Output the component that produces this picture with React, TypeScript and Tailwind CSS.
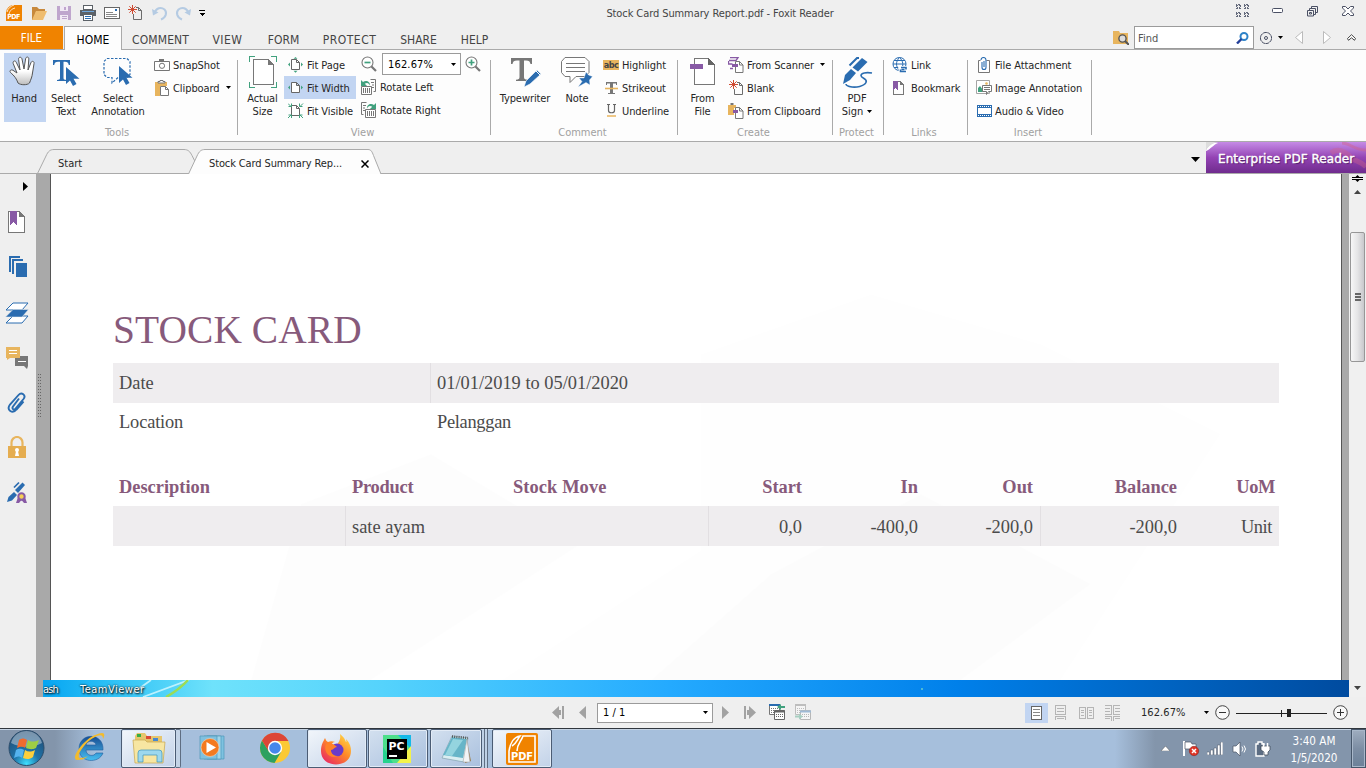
import React from "react";

type P = { children?: React.ReactNode; className?: string };

function Svg({ w, h, children, className = "", crisp = false }: { w: number; h: number; children: React.ReactNode; className?: string; crisp?: boolean }) {
  return (
    <svg width={w} height={h} viewBox={`0 0 ${w} ${h}`} fill="none" className={"shrink-0 " + className} shapeRendering={crisp ? "crispEdges" : undefined}>
      {children}
    </svg>
  );
}

const Down = ({ className = "" }: P) => (
  <Svg w={5} h={3} className={className}><path d="M0 0h5L2.500 3z" fill="#000" /></Svg>
);

/* ---------- quick access icons ---------- */
function FoxitIcon() {
  return (
    <Svg w={17} h={17}>
      <path d="M6 0h10v16H0V7C1 3 3 1 6 0z" fill="#f08300" />
      <path d="M1 7C2 3 5 1 8 0M3 9C4 5 6 4 9 3" stroke="#fff" strokeWidth=".8" />
      <text x="1.200" y="13.800" fontSize="7" fontWeight="bold" fill="#fff" fontFamily="DejaVu Sans" textLength="13">PDF</text>
    </Svg>
  );
}

function NewDoc() {
  return (
    <Svg w={15} h={16}>
      <path d="M5.500 9v5.500h8v-9l-3-3H8M10.500 2.500v3h3" stroke="#6c6c6c" />
      <path d="M4.500 0v9M0 4.500h9M1.300 1.300l6.400 6.400M7.700 1.300L1.300 7.700" stroke="#cf4b32" />
    </Svg>
  );
}

/* ---------- ribbon building blocks ---------- */
function Small({ icon, label, active, tail, className = "" }: { icon: React.ReactNode; label: string; active?: boolean; tail?: boolean; className?: string }) {
  return (
    <div className={"flex h-[23px] items-center whitespace-nowrap " + (active ? "bg-[#c2d5f2] " : "") + className}>
      <span className="flex w-[16px] shrink-0 justify-center">{icon}</span>
      <span className="ml-[3px] pt-[3px] tracking-[-0.08px]">{label}</span>
      {tail && <Down className="ml-[6px]" />}
    </div>
  );
}

function Big({ icon, lines, active, className = "" }: { icon: React.ReactNode; lines: React.ReactNode[]; active?: boolean; className?: string }) {
  return (
    <div className={"flex h-[69px] flex-col items-center whitespace-nowrap text-center leading-[13px] tracking-[-0.08px] " + (active ? "bg-[#c2d5f2] " : "") + className}>
      <span className="flex h-[39px] shrink-0 items-start pt-[3px]">{icon}</span>
      {lines.map((l, i) => <span key={i}>{l}</span>)}
    </div>
  );
}

function Group({ name, className = "", children }: P & { name: string }) {
  return (
    <section className={"flex shrink-0 " + className}>
      <div className="flex grow flex-col">
        <div className="flex h-[76px] pt-[3px]">{children}</div>
        <div className="pr-[3px] text-center leading-[16px] text-[#a0a0a0]">{name}</div>
      </div>
      <div className="mt-[10px] h-[75px] w-px bg-[#aaaaaa]" />
    </section>
  );
}

/* ---------- ribbon icons ---------- */
const Cursor = ({ x, y }: { x: number; y: number }) => (
  <path transform={`translate(${x} ${y})`} d="M0 0v17l4-3.500 3 5.500 3.500-2-3-5.300h6z" fill="#2a6cb0" />
);

function HandIcon() {
  return (
    <Svg w={28} h={30} className="-ml-[2px]">
      <defs><linearGradient id="hand" x1="0" y1="0" x2="0" y2="1"><stop offset=".5" stopColor="#fff" /><stop offset="1" stopColor="#bdbdbd" /></linearGradient></defs>
      <path d="M9 27C7 21 3 18 1.500 16.500c-1.500-1.500.5-3.500 2.500-2.200L8 17 4.200 7.500C3.500 5 6.200 4 7.200 6.200L11 14 9.600 3.500c-.3-2.800 2.900-3 3.400-.5L15 13l1.600-10.200c.4-2.500 3.400-2.200 3.200.3L19 14l3-7.500c1-2 3.600-1.200 3 1.200L23.500 17c-.4 4-1.500 6-3 10-2 2.300-9 2.300-11.500 0z" fill="url(#hand)" stroke="#555" strokeWidth="1" />
    </Svg>
  );
}
const SelectTextIcon = () => (
  <Svg w={28} h={32}>
    <path d="M1 4h17v5h-1.200C16.300 6.500 15.500 5.700 13 5.700h-1.500V22c0 1.500.8 1.800 3 2v1H5v-1c2.200-.2 3-.5 3-2V5.700H6C3.500 5.700 2.700 6.500 2.200 9H1z" fill="#2a6cb0" />
    <Cursor x={14} y={11} />
  </Svg>
);
const SelectAnnotIcon = () => (
  <Svg w={30} h={31}>
    <path d="M4 2.500h20l3 3v13l-3 3M15 21.500L9 27v-5.500H4l-3-3v-13l3-3" stroke="#2a6cb0" strokeDasharray="2.500 1.500" strokeWidth="1.200" />
    <Cursor x={16} y={10} />
  </Svg>
);
const CameraIcon = () => (
  <Svg w={16} h={12}><path d="M.5 2.500h15v9H.5z" stroke="#757575" fill="#fff" /><path d="M5 0h5v2H5z" fill="#757575" /><circle cx="8" cy="6.800" r="2.600" stroke="#757575" /></Svg>
);
const Clip = () => (
  <Svg w={16} h={16}><path d="M1 2h12v4H6v10H1z" fill="#e8b55e" /><path d="M4 3V1.500h2V.500h3v1h2V3z" fill="#fff" stroke="#777" /><path d="M6.500 6.500h5l3 3v6h-8zM11.500 6.500v3h3" stroke="#777" fill="#fff" /></Svg>
);
const ActualIcon = () => (
  <Svg w={28} h={32} crisp><path d="M.5 6V.500H6M22 .500h5.500V6M27.500 26v5.500H22M6 31.500H.5V26" stroke="#41a17e" /><path d="M4.500 3.500h15l5 5v20h-20z" fill="#fff" stroke="#777" /><path d="M19 3v6h6z" fill="#777" /></Svg>
);
function FitIcon({ kind }: { kind: "page" | "width" | "visible" }) {
  return (
    <Svg w={16} h={16}>
      <path d="M3.500 2.500h5l3 3v7h-8zM8.500 2.500v3h3" stroke="#666" fill="#fff" />
      {kind !== "visible" && <path d="M0 7.500l2-2v4zM15 7.500l-2-2v4z" fill="#41a17e" />}
      {kind === "page" && <path d="M7.500 0l2 1.700h-4zM7.500 15.700l2-2h-4z" fill="#41a17e" />}
      {kind === "visible" && <path d="M0 .500l3 3M.5 3.500h3v-3M15 .500l-3 3M14.500 3.500h-3v-3M0 15l3-3M.5 12h3v3M15 15l-3-3M14.500 12h-3v3" stroke="#41a17e" />}
    </Svg>
  );
}
const Mag = ({ plus = false }) => (
  <Svg w={16} h={16}><circle cx="6.500" cy="6.500" r="5.500" stroke="#777" strokeWidth="1.100" fill="#fff" /><path d="M10.500 10.500L15 15" stroke="#777" strokeWidth="2.200" /><path d={plus ? "M3.500 6.500h6M6.500 3.500v6" : "M3.500 6.500h6"} stroke="#41a17e" strokeWidth="1.700" /></Svg>
);
const Rotate = ({ right = false }) => (
  <Svg w={16} h={16}>
    <g transform={right ? "translate(15 0) scale(-1 1)" : undefined}>
      <path d="M9.500 .500h5v12h-2" stroke="#777" /><path d="M10 3.500h3M11 6h2M11 8.500h2" stroke="#777" />
      <path d="M.5 7.500h10v8H.5z" fill="#fff" stroke="#777" /><path d="M2.500 9v5M4.500 9v5M6.500 9v5M8.500 9v5" stroke="#777" />
      <path d="M0 1v6h6L3.800 4.800C6 3 8 4 9 6.500 9.500 2.500 5 .500 2 3z" fill="#41a17e" />
    </g>
  </Svg>
);
const TypeIcon = () => (
  <Svg w={31} h={32}><path d="M1 2h21v6h-1.500C20 5.500 19 4.500 16 4.500h-2V21c0 2 .8 2.500 3.500 2.700V25H6v-1.300C8.700 23.500 9.500 23 9.500 21V4.500H7C4 4.500 3 5.500 2.500 8H1z" fill="#777" /><path d="M14 31l2-6L27 14l4 4L20 28z" fill="#2a6cb0" stroke="#fff" strokeWidth=".6" /><path d="M26 15l4 4" stroke="#fff" /></Svg>
);
const NoteIcon = () => (
  <Svg w={32} h={32}><path d="M4 1.500h20l4 4v11l-4 4H15L9 26.500v-6H4l-3.500-4v-11z" stroke="#777" fill="#fff" /><path d="M5 7.500h19M5 11.500h19M5 15.500h19" stroke="#777" /><path d="M25 16l2.500 3 4 1.500-3 3.500.5 5-4-2.500L17 31l4-5.500-3-3.500h5z" fill="#2a6cb0" stroke="#fff" strokeWidth=".4" /></Svg>
);
const FileIcon = () => (
  <Svg w={26} h={31} crisp><path d="M4.500 2.500h14l6 6v20h-20z" fill="#fff" stroke="#777" /><path d="M18 2v7h7z" fill="#666" /><path d="M0 8h13v5H0z" fill="#885aa5" /></Svg>
);
const ScannerIcon = () => (
  <Svg w={16} h={16}><path d="M2 .700h8L8 3.500H1" stroke="#885aa5" strokeWidth="1.300" /><path d="M.5 4v3h4M2 11.500h3" stroke="#885aa5" strokeWidth="1.300" /><path d="M7.500 4.500h4l3.500 3.500v7.500H7.500zM11.500 4.500V8H15" stroke="#777" fill="#fff" /><path d="M4 7h6v3H4z" fill="#885aa5" /></Svg>
);
const FromClip = () => (
  <Svg w={16} h={16}><path d="M0 2h8v3H6v7H0z" fill="#e8b55e" /><path d="M2.500 0h3v2h-3z" fill="#777" /><path d="M7.500 4.500h4l3.500 3.500v7.500H7.500zM11.500 4.500V8H15" stroke="#777" fill="#fff" /><path d="M5 7h5v3H5z" fill="#885aa5" /></Svg>
);
const SignIcon = () => (
  <Svg w={31} h={33}>
    <path d="M1 28l2-9 6-6 5 4-6 7z" fill="#2a6cb0" /><path d="M10.500 11.500L20 2l5.500 4-9.500 9.500z" fill="#2a6cb0" /><path d="M7.500 9.500L15 2h2" stroke="#2a6cb0" strokeWidth="2" />
    <path d="M30 17c-6-1-11 0-11 2.500 0 3 7 3 5 7-2 4-10 5-14 4.500-3-.5-6-1-6-3" stroke="#2a6cb0" strokeWidth="1.600" />
  </Svg>
);
const GlobeIcon = () => (
  <Svg w={16} h={16}><circle cx="7.500" cy="7" r="6.500" stroke="#2a6cb0" fill="#fff" /><path d="M1 7h13M2 3.500h11M2 10.500h8M7.500.500c-4 4-4 9 0 13M7.500.500c4 4 4 7 2 13" stroke="#2a6cb0" /><path d="M6 9h10v7H7z" fill="#fff" /><path d="M9 10.500h5v2M14 14.500H8.500v-2M9.500 12.500h3" stroke="#2a6cb0" strokeWidth="1.600" /></Svg>
);
const BookmarkIcon = () => (
  <Svg w={12} h={14} crisp className="-ml-[2px]"><path d="M.5 7v6.500h10v-9l-4-4h-2" stroke="#777" /><path d="M7 0v4h4z" fill="#777" /><path d="M0 0h5v9L2.500 7 0 9z" fill="#885aa5" /></Svg>
);
const AttachIcon = () => (
  <Svg w={12} h={16}><path d="M8.500 3.500h3v12H.5v-12h2" stroke="#777" fill="#fff" /><path d="M4 5v5.500a2 2 0 004 0V3a2.300 2.300 0 00-5 0M6 4v6" stroke="#2a6cb0" strokeWidth="1.100" /></Svg>
);
const ImageIcon = () => (
  <Svg w={16} h={15}><path d="M.5.500h13v13H.5z" stroke="#a5a5a5" fill="#fff" /><path d="M2 12V8l2-2 3 4v2z" fill="#41a17e" /><circle cx="10.500" cy="3.500" r="1.300" fill="#e8b55e" /><path d="M6.500 5.500h9v6h-3l-2 3v-3h-4z" stroke="#777" fill="#fff" /><path d="M8 7.500h6M8 9.500h6" stroke="#777" /></Svg>
);
const FilmIcon = () => (
  <Svg w={15} h={12} crisp><path d="M0 0h15v12H0z" fill="#2a6cb0" /><path d="M1 3h13v6H1z" fill="#fff" /><path d="M1 1.500h14M1 10.500h14" stroke="#fff" strokeDasharray="1 1" /></Svg>
);

function TitleBar() {
  return (
    <header className="flex h-[26px] items-center">
      <div className="flex w-[500px] items-center pl-[6px]">
        <FoxitIcon />
        <Svg w={17} h={15} className="ml-[8px]"><path d="M1 1h5l2 2h6v3H5l-3 8H1z" fill="#c8893c" /><path d="M5 5h11l-4 9H1z" fill="#efbd70" /></Svg>
        <Svg w={15} h={15} className="ml-[9px]" crisp><path d="M0 0h14v14H0z" fill="#bfa6cd" /><path d="M3 0h8v5H3zM3 9h8v5H3z" fill="#f1eaf4" /><path d="M7 1h2v3H7zM5 10h5v1H5zM5 12h5v1H5z" fill="#bfa6cd" /></Svg>
        <Svg w={17} h={16} className="ml-[8px]" crisp><path d="M0 5h16v6H0z" fill="#5c6268" /><path d="M3.500.500h9v4h-9zM3.500 9.500h9v6h-9z" fill="#fff" stroke="#5c6268" /><path d="M2 6h12v1H2z" fill="#6fa8dc" /><path d="M5 11.500h6M5 13.500h6" stroke="#2a6cb0" /></Svg>
        <Svg w={16} h={12} className="ml-[7px]" crisp><path d="M.5.500h15v11H.5z" fill="#fff" stroke="#666" /><path d="M2 5.500h7M2 7.500h11M2 9.500h11" stroke="#888" /><path d="M11 2h2v2h-2z" fill="#2a6cb0" /></Svg>
        <span className="ml-[8px]"><NewDoc /></span>
        <Svg w={16} h={15} className="ml-[9px]"><path d="M2.500 7C4 2 9 .500 12.500 3.500c3 3 1.500 8-3.500 10" stroke="#b5cbe3" strokeWidth="2" /><path d="M0 3l1 6.500 5.500-3z" fill="#b5cbe3" /></Svg>
        <Svg w={16} h={15} className="ml-[7px]"><g transform="translate(16 0) scale(-1 1)"><path d="M2.500 7C4 2 9 .500 12.500 3.500c3 3 1.500 8-3.500 10" stroke="#b5cbe3" strokeWidth="2" /><path d="M0 3l1 6.500 5.500-3z" fill="#b5cbe3" /></g></Svg>
        <Svg w={6} h={6} className="ml-[8px]" crisp><path d="M0 0h6v1H0zM0 3h6L3 6z" fill="#000" /></Svg>
      </div>
      <div className="w-[440px] pt-[2px] text-center tracking-[-0.09px] text-[#444]">Stock Card Summary Report.pdf - Foxit Reader</div>
      <div className="ml-auto flex items-center pr-[12px] pb-[4px]">
        <Svg w={14} h={14} className="mr-[22px]" crisp>
          {[[0, 0], [8, 0], [0, 8], [8, 8]].map(([x, y]) => <path key={`${x}${y}`} transform={`translate(${x} ${y})`} d="M.5 2V.500H4.500V4.500H.5V2M1 1l3 3M4 1L1 4" stroke="#63697b" strokeDasharray="2 1" />)}
        </Svg>
        <Svg w={12} h={6} className="mr-[23px]"><rect x=".5" y=".5" width="10" height="4" rx="1" stroke="#4a5064" fill="#fff" /></Svg>
        <Svg w={12} h={11} className="mr-[23px]"><path d="M4.500 3V.500h6v6H8M2.500 5V2.500h6v6H7M.5 4.500h6v5.500H.5zM2.500 6.500h2v1.500h-2z" stroke="#4a5064" fill="none" /></Svg>
        <Svg w={12} h={10}><path d="M.5.500h3L6 3 8.500.500h3v1.500L8.500 5l3 3v1.500h-3L6 7 3.500 9.500h-3V8l3-3-3-3z" stroke="#4a5064" fill="#fff" /></Svg>
      </div>
    </header>
  );
}

function MenuRow() {
  const item = "h-full flex items-center justify-center pt-[4px]";
  return (
    <nav className="flex h-[24px] shrink-0 border-b border-[#aaaaaa] text-[12px] text-[#444]">
      <div className="flex w-[63px] items-center justify-center bg-[#f08300] pt-[3px] text-[11.500px] text-white">FILE</div>
      <div className="ml-[1px] flex h-[24px] w-[58px] items-center justify-center border border-b-0 border-[#aaaaaa] bg-[#fdfdfd] pt-[3px] text-black">HOME</div>
      <div className={item + " w-[77px] tracking-[0.100px]"}>COMMENT</div>
      <div className={item + " w-[57px] tracking-[0.500px]"}>VIEW</div>
      <div className={item + " w-[55px]"}>FORM</div>
      <div className={item + " w-[77px] tracking-[0.500px]"}>PROTECT</div>
      <div className={item + " w-[61px]"}>SHARE</div>
      <div className={item + " w-[51px]"}>HELP</div>
      <div className="ml-auto flex h-[23px] items-center pr-[10px] text-[11px]">
        <Svg w={16} h={15}><path d="M0 1h6l1 2h8v11H0z" fill="#e8b55e" /><circle cx="9.500" cy="8.500" r="3.600" stroke="#555" fill="#ddd" strokeWidth="1.400" /><path d="M12 11l4 4" stroke="#555" strokeWidth="2" /></Svg>
        <div className="ml-[5px] flex h-[23px] w-[120px] items-center justify-between border border-[#9b9b9b] bg-white pl-[3px] pr-[4px] text-[#555]">
          <span className="pt-[3px]">Find</span>
          <Svg w={13} h={12}><circle cx="8" cy="4.500" r="3.500" stroke="#2e83c8" strokeWidth="2" /><path d="M5.500 7L1 11.500" stroke="#233f99" strokeWidth="2.400" /></Svg>
        </div>
        <Svg w={14} h={14} className="ml-[5px]">
          <circle cx="7" cy="7" r="5.600" stroke="#4a5064" strokeWidth="1" />
          <circle cx="7" cy="7" r="6.200" stroke="#efefef" strokeDasharray="1 3.870" strokeWidth="1.200" />
          <circle cx="7" cy="7" r="1.500" stroke="#4a5064" />
        </Svg>
        <Down className="ml-[5px]" />
        <Svg w={9} h={13} className="ml-[12px]"><path d="M7.500.500v12L.5 6.500z" stroke="#bbb" fill="#fff" /></Svg>
        <Svg w={9} h={13} className="ml-[19px]"><path d="M.5.500v12L7.500 6.500z" stroke="#bbb" fill="#fff" /></Svg>
        <Svg w={9} h={7} className="ml-[15px]"><path d="M4.500.700L.5 4.500l1 1.800 3-2.500 3 2.500 1-1.800z" stroke="#444" fill="#fff" /></Svg>
      </div>
    </nav>
  );
}

function Ribbon() {
  return (
    <div className="flex h-[92px] shrink-0 border-b border-[#aaaaaa] bg-[#fdfdfd] text-[#262626]">
      <Group name="Tools" className="w-[238px]">
        <Big active className="ml-[4px] w-[42px] pr-[2px]" icon={<HandIcon />} lines={["Hand"]} />
        <Big className="w-[40px]" icon={<SelectTextIcon />} lines={["Select", "Text"]} />
        <Big className="w-[64px]" icon={<SelectAnnotIcon />} lines={["Select", "Annotation"]} />
        <div className="ml-[4px]">
          <Small icon={<CameraIcon />} label="SnapShot" />
          <Small icon={<Clip />} label="Clipboard" tail />
        </div>
      </Group>
      <Group name="View" className="w-[253px]">
        <Big className="ml-[3px] w-[43px]" icon={<ActualIcon />} lines={["Actual", "Size"]} />
        <div className="w-[72px]">
          <Small className="pl-[4px]" icon={<FitIcon kind="page" />} label="Fit Page" />
          <Small active className="pl-[4px]" icon={<FitIcon kind="width" />} label="Fit Width" />
          <Small className="pl-[4px]" icon={<FitIcon kind="visible" />} label="Fit Visible" />
        </div>
        <div className="ml-[5px]">
          <div className="flex h-[22px] items-center">
            <Mag />
            <div className="ml-[5px] flex h-[22px] w-[79px] items-center justify-between border border-[#9b9b9b] bg-white pl-[5px] pr-[4px] text-black"><span className="pt-[2px] tracking-[0.150px]">162.67%</span><Down /></div>
            <span className="ml-[4px]"><Mag plus /></span>
          </div>
          <Small icon={<Rotate />} label="Rotate Left" />
          <Small icon={<Rotate right />} label="Rotate Right" />
        </div>
      </Group>
      <Group name="Comment" className="w-[187px]">
        <Big className="ml-[4px] w-[60px]" icon={<TypeIcon />} lines={["Typewriter"]} />
        <Big className="ml-[2px] w-[40px]" icon={<NoteIcon />} lines={["Note"]} />
        <div className="ml-[6px]">
          <Small icon={<span className="w-[16px] overflow-hidden bg-[#e8b55e] text-center text-[9px] font-bold leading-[10px] tracking-[-0.6px] text-[#444]">abc</span>} label="Highlight" />
          <Small icon={<Svg w={13} h={14}><path d="M1 1h11v3h-1V2.500H8V12h2v1H3v-1h2V2.500H2V4H1z" fill="#777" /><path d="M0 7.500h13" stroke="#e8b55e" strokeWidth="1.600" /></Svg>} label="Strikeout" />
          <Small icon={<Svg w={9} h={13}><path d="M0 .500h3M6 .500h3M1.500 1v5.500c0 3 6 3 6 0V1" stroke="#666" strokeWidth="1.200" /><path d="M0 12h9" stroke="#e8b55e" strokeWidth="1.500" /></Svg>} label="Underline" />
        </div>
      </Group>
      <Group name="Create" className="w-[155px]">
        <Big className="ml-[4px] w-[41px]" icon={<FileIcon />} lines={["From", "File"]} />
        <div className="ml-[5px] tracking-[-0.100px]">
          <Small icon={<ScannerIcon />} label="From Scanner" tail />
          <Small icon={<NewDoc />} label="Blank" />
          <Small icon={<FromClip />} label="From Clipboard" />
        </div>
      </Group>
      <Group name="Protect" className="w-[51px]">
        <Big className="w-[48px]" icon={<SignIcon />} lines={["PDF", <span className="flex items-center gap-[4px]">Sign <Down /></span>]} />
      </Group>
      <Group name="Links" className="w-[84px]">
        <div className="ml-[8px]">
          <Small icon={<GlobeIcon />} label="Link" />
          <Small icon={<BookmarkIcon />} label="Bookmark" />
        </div>
      </Group>
      <Group name="Insert" className="w-[124px]">
        <div className="ml-[8px]">
          <Small icon={<AttachIcon />} label="File Attachment" />
          <Small icon={<ImageIcon />} label="Image Annotation" />
          <Small icon={<FilmIcon />} label="Audio & Video" />
        </div>
      </Group>
    </div>
  );
}

function DocTabs() {
  return (
    <div className="relative flex h-[32px] shrink-0 border-b border-[#aaaaaa]">
      <svg width="390" height="32" className="absolute left-0 top-0" fill="none">
        <path d="M37.500 31.500L46 14c2-4.500 4-6.500 8-6.500h130c4 0 6 2 8 6l3 6" stroke="#aaa" />
        <path d="M188.500 32L197 14c2-4.500 4-6.500 8-6.500h163c3 0 4 2 5.500 6L381 32z" fill="#fdfdfd" />
        <path d="M188.500 32L197 14c2-4.500 4-6.500 8-6.500h163c3 0 4 2 5.500 6L381 32" stroke="#aaa" />
      </svg>
      <div className="relative flex h-[32px] w-[390px] items-center pt-[10px] leading-none text-[#262626]">
        <span className="ml-[58px] w-[151px]">Start</span>
        <span className="w-[152px] tracking-[-0.120px]">Stock Card Summary Rep...</span>
        <Svg w={8} h={8} className="mt-[2px]"><path d="M.5.500l7 7M7.500.500l-7 7" stroke="#000" strokeWidth="1.500" /></Svg>
      </div>
      <Svg w={9} h={6} className="ml-auto mr-[6px] mt-[15px]"><path d="M0 0h9L4.500 5z" fill="#000" /></Svg>
      <div className="relative flex h-[31px] w-[160px] items-center overflow-hidden bg-linear-to-b from-[#c58be6] via-[#9443b4] to-[#6f2c8e] pl-[12px] pt-[3px] font-['DejaVu_Sans',sans-serif] text-[12px] text-white [font-stretch:normal]">
        <svg width="160" height="31" className="absolute left-0 top-0" fill="none">
          <path d="M0 8C2 4 6 0 12 1c-5 2-7 6-12 8z" fill="#fff" /><path d="M0 0h12C6 1 3 4 0 8z" fill="#ddd" />
          <path d="M125 11c6-5 14-2 22 6 5 3 9 3 13 8" stroke="#d0628a" strokeOpacity=".4" strokeWidth="5" />
          <path d="M136 1c8 0 12 7 24 7" stroke="#d0628a" strokeOpacity=".45" strokeWidth="3" />
        </svg>
        <span className="relative whitespace-nowrap tracking-[0.050px] [-webkit-text-stroke:0.400px_#fff] [text-shadow:1px_1px_1px_#4c1c68]">Enterprise PDF Reader</span>
      </div>
    </div>
  );
}

function SideBar() {
  return (
    <aside className="flex w-[36px] shrink-0 flex-col items-center pr-[2px]">
      <Svg w={5} h={9} className="ml-[17px] mt-[8px]"><path d="M0 0v9l5-4.500z" fill="#000" /></Svg>
      <Svg w={18} h={23} className="mt-[20px]" crisp><path d="M.5.500h11l5 5v16H.5z" fill="#fff" stroke="#777" /><path d="M11 0v6h6z" fill="#777" /><path d="M2 0h7v14l-3.500-3L2 14z" fill="#885aa5" /></Svg>
      <Svg w={19} h={22} className="mt-[22px]" crisp><path d="M2 16V1h10M5 18V4h10" stroke="#2a6cb0" strokeWidth="2" /><path d="M7 6h12v15H7z" fill="#2a6cb0" stroke="#efefef" strokeWidth="1" /></Svg>
      <Svg w={24} h={22} className="mt-[24px]"><path d="M8 1h15l-6 7H1zM8 14h15l-6 7H1z" fill="#fff" stroke="#2a6cb0" /><path d="M8 7.500h15.500L17 15H.5z" fill="#2a6cb0" stroke="#efefef" strokeWidth=".5" /></Svg>
      <Svg w={22} h={22} className="mt-[23px]"><path d="M9 9h13v10l-1 3-3-3H9z" fill="#777" /><path d="M0 0h14v11H4l-3 2v-2H0z" fill="#e8b55e" /><path d="M3 3.500h8M3 6.500h8M12 14.500h8" stroke="#fff" /></Svg>
      <Svg w={20} h={22} className="mt-[23px]"><path d="M12 6.500l-6 8c-1.500 2.500 1 4 2.600 2L16.500 7c3-4-2-7.500-5-4L3 12.500c-4 5.500 2.500 10 6.500 5L16.500 9.500" stroke="#2a6cb0" strokeWidth="1.900" /></Svg>
      <Svg w={18} h={22} className="mt-[22px]"><path d="M3.500 11V6.500a5.500 5.500 0 0111 0V11" stroke="#e8b55e" strokeWidth="2.200" /><path d="M0 10h18v12H0z" fill="#e5ad50" /><circle cx="9" cy="14" r="2" fill="#fff" /><path d="M8 15h2l1 5H7z" fill="#fff" /></Svg>
      <Svg w={21} h={23} className="mt-[23px]"><path d="M0 21l1.500-5 5.500-5 3 3-5 5.500z" fill="#2a6cb0" /><path d="M8 9l7.500-7.500L18 4l-7 8z" fill="#2a6cb0" /><path d="M7 6.500l5-5" stroke="#2a6cb0" strokeWidth="1.700" /><path d="M11 16l-2 6h3l2.500-3 2.500 3h3l-2-6" fill="#885aa5" /><circle cx="14.500" cy="15.500" r="3.200" fill="#f6cf55" stroke="#885aa5" strokeWidth="2" /></Svg>
    </aside>
  );
}

function Document() {
  const cols = "grid grid-cols-[232px_161px_202px_101px_116px_115px_144px_95px]";
  const cell = "flex items-center pl-[6px]";
  const right = "flex items-center justify-end pr-[7px]";
  return (
    <main className="relative flex h-[506px] grow flex-col overflow-hidden bg-white pl-[62px] font-['Liberation_Serif',serif] text-[18.400px] text-[#4b4b4b]">
      <svg width="1290" height="506" className="absolute left-0 top-0">
        <path d="M650 180l170-60 170 50 180 90-160 246H450l200-130z" fill="#000" fillOpacity=".005" />
        <path d="M250 330l130-50 150 90-210 136H200z" fill="#000" fillOpacity=".006" />
        <path d="M720 400l150-80 170 90-130 96H600z" fill="#000" fillOpacity=".006" />
      </svg>
      <h1 className="relative mt-[133px] h-[56px] whitespace-nowrap text-[39.400px] leading-[47px] tracking-[0.100px] text-[#875a7b]">STOCK CARD</h1>
      <div className="relative grid h-[40px] w-[1166px] shrink-0 grid-cols-[318px_1fr] bg-[#efedef]">
        <div className={cell + " border-r border-[#e2dfe2] pt-[2px]"}>Date</div>
        <div className={cell + " pt-[2px]"}>01/01/2019 to 05/01/2020</div>
      </div>
      <div className="relative grid h-[39px] w-[1166px] shrink-0 grid-cols-[318px_1fr]">
        <div className={cell + " tracking-[-0.150px]"}>Location</div>
        <div className={cell + " tracking-[-0.300px]"}>Pelanggan</div>
      </div>
      <div className={"relative mt-[26px] h-[39px] w-[1166px] shrink-0 font-bold text-[#875a7b] " + cols}>
        <div className={cell}>Description</div><div className={cell + " ml-[1px] tracking-[-0.250px]"}>Product</div><div className={cell + " ml-[1px] tracking-[0.100px]"}>Stock Move</div>
        <div className={right}>Start</div><div className={right}>In</div><div className={right}>Out</div><div className={right}>Balance</div>
        <div className="flex items-center justify-end pr-[4px] tracking-[-0.400px]">UoM</div>
      </div>
      <div className={"relative -mt-px h-[40px] w-[1166px] shrink-0 bg-[#efedef] " + cols}>
        <div /><div className={cell + " border-l border-[#e2dfe2] pt-[3px]"}>sate ayam</div><div />
        <div className={right + " border-l border-[#e2dfe2] pt-[3px]"}>0,0</div><div className={right + " pt-[3px]"}>-400,0</div><div className={right + " pt-[3px]"}>-200,0</div>
        <div className={right + " border-l border-[#e2dfe2] pt-[3px]"}>-200,0</div>
        <div className="flex items-center justify-end pr-[7px] pt-[3px] tracking-[-0.400px]">Unit</div>
      </div>
    </main>
  );
}

function DesktopStrip() {
  return (
    <div className="relative flex h-[17px] w-[1306px] items-center overflow-hidden">
      <svg width="1306" height="17" className="absolute left-0 top-0" fill="none">
        <defs>
          <linearGradient id="sky"><stop offset="0" stopColor="#06a5f2" /><stop offset=".05" stopColor="#2cc0f5" /><stop offset=".13" stopColor="#6fe2fb" /><stop offset=".26" stopColor="#55d3fc" /><stop offset=".48" stopColor="#24aaff" /><stop offset=".7" stopColor="#0080ea" /><stop offset="1" stopColor="#004b9f" /></linearGradient>
        </defs>
        <path d="M0 0h1306v17H0z" fill="url(#sky)" />
        <path d="M100 17L146 0M90 13L108 0" stroke="#d7f9ff" strokeOpacity=".8" strokeWidth="1.800" />
        <path d="M123 17Q136 10 145 0" stroke="#9cdc55" strokeWidth="2.500" />
        <circle cx="879" cy="9" r="1" fill="#6cc" />
      </svg>
      <span className="relative w-[37px] pt-[3px] tracking-[-0.800px] text-white [text-shadow:1px_1px_2px_#000,0_0_2px_#000]">ash</span>
      <span className="relative pt-[3px] tracking-[0.500px] text-white [text-shadow:1px_1px_2px_#000,0_0_2px_#000]">TeamViewer</span>
    </div>
  );
}

function Scrollbar() {
  return (
    <div className="flex w-[17px] shrink-0 flex-col items-center bg-[#f0f0f0]">
      <Svg w={11} h={7} className="mt-[1px]"><path d="M0 2.500h11M0 4.500h11" stroke="#000" /><path d="M5.500 0l2 2h-4zM5.500 7l2-2h-4z" fill="#000" /></Svg>
      <Svg w={7} h={4} className="mt-[8px]"><path d="M0 4h7L3.500 0z" fill="#444" /></Svg>
      <div className="mt-[38px] flex h-[130px] w-[15px] flex-col items-center justify-center gap-[1px] rounded-[2px] border border-[#979797] bg-linear-to-r from-[#f7f7f7] via-[#e5e5e6] to-[#c8c8cc]">
        <i className="h-[2px] w-[6px] bg-[#666]" /><i className="h-[2px] w-[6px] bg-[#666]" /><i className="h-[2px] w-[6px] bg-[#666]" />
      </div>
      <Svg w={7} h={4} className="mt-auto mb-[7px]"><path d="M0 0h7L3.500 4z" fill="#444" /></Svg>
    </div>
  );
}

const Calendar = ({ back = false }) => (
  <Svg w={17} h={17} className={back ? "opacity-40" : ""}>
    <path d="M.5.500h10v10H.5z" fill="#fff" stroke="#777" /><path d="M0 1h11" stroke={back ? "#777" : "#2a6cb0"} strokeWidth="2" /><path d="M2 4.500h8M2 6.500h8M2 8.500h8" stroke="#777" strokeDasharray="1 1" />
    <path d="M5.500 6.500h10v9h-10z" fill="#fff" stroke="#666" /><path d="M5 7.500h11" stroke={back ? "#2a6cb0" : "#666"} strokeWidth="2" /><path d="M7 10.500h8M7 12.500h8" stroke="#666" strokeDasharray="1 1" />
    <path d={back ? "M0 11.500h4v-2l4 3-4 3v-2H0z" : "M16 2h-4V0L8 3l4 3V4h4z"} fill="#41a17e" />
  </Svg>
);

function StatusBar() {
  const g = "#a2a2a2";
  return (
    <div className="flex h-[31px] shrink-0 items-center">
      <Svg w={13} h={13} className="ml-[552px]"><path d="M7 0v13L0 6.500z" fill={g} /><path d="M8 4v5M11 0v13" stroke={g} strokeWidth="2" /></Svg>
      <Svg w={7} h={13} className="ml-[14px]"><path d="M7 0v13L0 6.500z" fill={g} /></Svg>
      <div className="ml-[11px] flex h-[20px] w-[116px] items-center justify-between border border-[#9b9b9b] bg-white pl-[5px] pr-[4px] text-black"><span className="pt-[2px]">1 / 1</span><Down /></div>
      <Svg w={7} h={13} className="ml-[9px]"><path d="M0 0v13l7-6.500z" fill={g} /></Svg>
      <Svg w={13} h={13} className="ml-[15px]"><path d="M5 0v13l7-6.500z" fill={g} /><path d="M1 0v13M4 4v5" stroke={g} strokeWidth="2" /></Svg>
      <span className="ml-[12px]"><Calendar /></span>
      <span className="ml-[9px]"><Calendar back /></span>
      <div className="ml-auto flex items-center pr-[18px] text-[#262626]">
        <span className="flex h-[20px] w-[23px] items-center justify-center bg-[#c2d5f2]"><Svg w={12} h={14} crisp><path d="M.5.500h10v13H.5z" fill="#fff" stroke="#666" /><path d="M2 3.500h7M2 6.500h7M2 9.500h7" stroke="#888" /></Svg></span>
        <Svg w={11} h={16} className="ml-[7px]" crisp><path d="M.5.500h10v9H.5zM.5 15v-3.500h10V15M2 3.500h7M2 6.500h7M2 13.500h7" stroke="#b5b5b5" /></Svg>
        <Svg w={16} h={12} className="ml-[13px]" crisp><path d="M.5.500h6v11h-6zM8.500.500h6v11h-6zM2 3.500h3M2 5.500h3M2 8.500h3M10 3.500h3M10 5.500h3M10 8.500h3" stroke="#b5b5b5" /></Svg>
        <Svg w={16} h={16} className="ml-[10px]" crisp><path d="M0 .500h6.500v9H0M15 .500H8.500v9H15M0 11.500h6.500V16M15 11.500H8.500V16M0 3.500h5M0 6.500h5M10 3.500h5M10 6.500h5M0 13.500h5M10 13.500h5" stroke="#b5b5b5" /></Svg>
        <span className="ml-[20px] w-[65px] pt-[2px] tracking-[0.080px]">162.67%</span>
        <Down className="-ml-[2px]" />
        <Svg w={15} h={15} className="ml-[6px]"><circle cx="7.500" cy="7.500" r="6.800" stroke="#444" fill="#f8f8f8" /><path d="M4 7.500h7" stroke="#333" /></Svg>
        <Svg w={91} h={10} className="ml-[6px]" crisp><path d="M0 5.500h91M45.500 2v7" stroke="#222" /><path d="M51 1h4v8h-4z" fill="#222" /></Svg>
        <Svg w={15} h={15} className="ml-[6px]"><circle cx="7.500" cy="7.500" r="6.800" stroke="#444" fill="#f8f8f8" /><path d="M4 7.500h7M7.500 4v7" stroke="#333" /></Svg>
      </div>
    </div>
  );
}

function TaskButton({ children, className = "", bright = false }: P & { bright?: boolean }) {
  return (
    <div className={"flex h-[39px] shrink-0 items-center justify-center rounded-[2px] border border-[#4b5c74] shadow-[inset_0_0_0_1px_#e2ebf6] " + (bright ? "bg-linear-to-br from-[#f2f6fb] to-[#c2d2e8] " : "bg-linear-to-br from-[#d3e0ef] to-[#a9c0de] ") + className}>
      {children}
    </div>
  );
}

function Taskbar() {
  return (
    <footer className="flex h-[40px] shrink-0 border-t border-[#30363d] bg-[linear-gradient(90deg,#8395ab_0,#8395ab_55px,#a6bfdc_95px,#a6bfdc_1115px,#8395ab_1155px)] shadow-[inset_0_1px_0_#c5d3e3]">
      <Svg w={37} h={38} className="ml-[8px]">
        <defs><radialGradient id="orb" cx=".5" cy=".95" r=".9"><stop offset="0" stopColor="#3fe0ff" /><stop offset=".4" stopColor="#1f74a9" /><stop offset="1" stopColor="#204d76" /></radialGradient></defs>
        <circle cx="18.500" cy="19" r="17.500" fill="url(#orb)" stroke="#2d4d6b" />
        <path d="M3 14C7-2 30-2 34 14 24 19 13 19 3 14z" fill="#fff" fillOpacity=".4" />
        <path d="M11 11c3-2 5-2 8 0l-2 8c-3-2-5-1-8 0z" fill="#ef6b2f" /><path d="M20 11c3 2 6 2 11 0l-3 8c-4 2-7 1-10 0z" fill="#9fce45" />
        <path d="M8 21c3-2 6-1 8 0l-2 8c-2-2-5-2-8 0z" fill="#55b3ee" /><path d="M17 21c3 2 6 2 10 0l-2 7c-4 3-7 2-10 1z" fill="#fccf3d" />
      </Svg>
      <Svg w={34} h={34} className="ml-[28px] mt-[2px]">
        <defs><linearGradient id="ie" x1="0" y1="0" x2="0" y2="1"><stop offset="0" stopColor="#174d93" /><stop offset="1" stopColor="#48bff2" /></linearGradient></defs>
        <path d="M30 19H13c0 6 8 7 10 3h7c-4 11-24 10-24-4C6 1 31 1 30 19zM13 14h10c-1-5-9-5-10 0z" fill="url(#ie)" stroke="#205d9d" strokeWidth=".6" />
        <path d="M4 29C-3 28 10 9 22 4c9-4 11-2 8 4 0-5-4-4-8-2C11 11 1 28 8 27c3 0 5-1 7-2-3 3-7 4-11 4z" fill="#f3bb2d" />
      </Svg>
      <TaskButton bright className="ml-[14px] w-[55px]">
        <Svg w={34} h={33}>
          <path d="M3 4l2-3h8l2 3h15v24H3z" fill="#e6c66d" /><path d="M1 8h12l2 2h18l-2 21H3z" fill="#f7e6a2" stroke="#c6a54e" strokeWidth=".7" />
          <path d="M5 2h4v3H5z" fill="#35ad47" /><path d="M14 4h5v3h-5z" fill="#da4b36" /><path d="M21 6h5v3h-5z" fill="#4789d0" />
          <path d="M6 30V21q0-3 3-3h18q3 0 3 3v9h-5v-7H11v7z" fill="#9cd8ee" stroke="#4d9dbe" strokeWidth=".8" />
        </Svg>
      </TaskButton>
      <div className="h-[39px] w-[5px] rounded-r-[2px] border border-l-0 border-[#5e6d82] bg-[#c3d3e6]" />
      <Svg w={30} h={28} className="ml-[18px] mt-[6px]">
        <path d="M8 1h17v23H8z" fill="#7ec2e0" stroke="#4f9ab9" strokeWidth=".7" /><path d="M5 1h17v23H5z" fill="#a1d5ea" stroke="#4f9ab9" strokeWidth=".7" /><path d="M1 1h17v23H1z" fill="#80c1df" stroke="#4f9ab9" strokeWidth=".7" />
        <circle cx="11" cy="12.500" r="9" fill="#f47a20" stroke="#fbd3b0" strokeWidth=".6" /><path d="M7.500 7v11l9.500-5.500z" fill="#fff" />
      </Svg>
      <Svg w={32} h={32} className="ml-[30px] mt-[3px]">
        <circle cx="16" cy="16" r="15" fill="#fbc934" /><path d="M3 8.500A15 15 0 0015.500 31L22 20 10 19.500z" fill="#2da160" /><path d="M3 8.500A15 15 0 0129.500 9H16L9.500 19z" fill="#dc4637" />
        <circle cx="16" cy="16" r="7.200" fill="#fff" /><circle cx="16" cy="16" r="5.800" fill="#4587ec" />
      </Svg>
      <TaskButton bright className="ml-[16px] w-[60px]">
        <Svg w={32} h={32} className="-ml-[2px]">
          <defs><linearGradient id="fx" x1="1" y1="0" x2=".2" y2="1"><stop offset="0" stopColor="#ffe94b" /><stop offset=".5" stopColor="#ff8a28" /><stop offset="1" stopColor="#e92863" /></linearGradient></defs>
          <path d="M20 1c5 4 5 6 6 8 1 0 0-2 0-3 4 4 5 8 5 12 0 18-30 18-30 0C1 12 3 9 5 5c1 2 1 3 3 4 2-1 5-1 7 0-2 0-4 2-4 4l5 1c3-6 5-7 4-13z" fill="url(#fx)" />
          <circle cx="17" cy="17" r="6.500" fill="#693bc9" /><path d="M6 11c5-2 9 1 11 3-3 0-3 3-6 3 0 4 3 6 8 6-10 4-16-5-13-12z" fill="#ff8229" />
        </Svg>
      </TaskButton>
      <TaskButton className="ml-[1px] w-[60px]">
        <Svg w={28} h={28} className="-ml-[2px]">
          <path d="M0 0h28v28H0z" fill="#4ddf8b" /><path d="M15 0h13v14z" fill="#15b9e8" /><path d="M14 28l14-17v17z" fill="#f3f34b" /><path d="M0 12l10 16H0z" fill="#25d38e" />
          <path d="M4 4h20v20H4z" fill="#000" /><path d="M6 20h8v2H6z" fill="#fff" /><text x="5.500" y="15" fontFamily="DejaVu Sans" fontWeight="bold" fontSize="10.500" textLength="16" lengthAdjust="spacingAndGlyphs" fill="#fff">PC</text>
        </Svg>
      </TaskButton>
      <TaskButton className="ml-[2px] w-[52px]">
        <Svg w={31} h={30}>
          <path d="M25 3l5 24-6 2z" fill="#9c7b45" /><path d="M11 2l16 2-4 24L1 24z" fill="#daeef2" stroke="#7799a4" strokeWidth=".6" /><path d="M11 3l15 2-4 19L2 21z" fill="#67b5c8" /><path d="M12 5l10 1-11 16-7-1z" fill="#94d4df" /><path d="M26 5l3 23-7 0z" fill="#f2f4f5" stroke="#999" strokeWidth=".5" /><path d="M11 2.500l16 1.500" stroke="#555" strokeWidth="2.500" strokeDasharray="1 1.200" />
        </Svg>
      </TaskButton>
      <div className="h-[39px] w-[3px] border-r border-[#5e6d82] bg-[#bfd1e6]" /><div className="h-[39px] w-[3px] border-r border-[#5e6d82] bg-[#bfd1e6]" />
      <TaskButton bright className="ml-[4px] w-[60px]">
        <Svg w={32} h={32}><rect width="32" height="32" rx="2" fill="#f08300" /><path d="M3 18V29h26V3H17C15 9 11 11 11 18M3 18C4 10 8 4 14 3c-3 4-4 8-8 10" stroke="#fff" strokeWidth="1.600" /><text x="5" y="27" fontSize="11" fontWeight="bold" fontFamily="DejaVu Sans" fill="#fff" textLength="22">PDF</text></Svg>
      </TaskButton>
      <div className="ml-auto flex items-center">
        <Svg w={9} h={5}><path d="M0 5h9L4.500 0z" fill="#fff" stroke="#444" strokeWidth=".4" /></Svg>
        <Svg w={18} h={17} className="ml-[12px]"><path d="M2 1v15" stroke="#fff" strokeWidth="2" /><path d="M3 2h6l1 2h4v7H9l-1-2H3z" fill="#fff" stroke="#4a5566" strokeWidth=".7" /><circle cx="12" cy="11" r="4.700" fill="#df3527" stroke="#7c1b17" strokeWidth=".5" /><path d="M10 9l4 4M14 9l-4 4" stroke="#fff" strokeWidth="1.500" /></Svg>
        <Svg w={16} h={13} className="ml-[7px]"><path d="M0 10h2.500v3H0zM3.500 8H6v5H3.500zM7 6h2.500v7H7zM10.500 3H13v10h-2.500zM13.500 0H16v13h-2.500z" fill="#fff" stroke="#4a5566" strokeWidth=".5" /></Svg>
        <Svg w={15} h={14} className="ml-[9px]"><path d="M1 4h3l4-4v14l-4-4H1z" fill="#fff" stroke="#4a5566" strokeWidth=".7" /><path d="M10 4.500q2 2.500 0 5M12 3.500q3 3.500 0 7" stroke="#fff" /></Svg>
        <Svg w={16} h={16} className="ml-[8px]"><path d="M1 3h2V1h4v2h2v12H1z" fill="#5c6d83" stroke="#fff" strokeWidth="1.400" /><path d="M6 5h9v4l-2 2v3H9v-3L6 9z" fill="#fff" stroke="#34404f" strokeWidth=".7" /><path d="M8.500 2v4M12.500 2v4" stroke="#fff" strokeWidth="1.500" /></Svg>
        <div className="ml-[14px] w-[58px] pt-[2px] text-center text-[11.600px] leading-[17px] text-white"><div>3:40 AM</div><div>1/5/2020</div></div>
        <div className="ml-[8px] h-[39px] w-[15px] border border-[#46566a] bg-linear-to-b from-[#9fadbf] via-[#7d8ea4] to-[#6c8199] shadow-[inset_0_0_0_1px_#a9b8ca]" />
      </div>
    </footer>
  );
}

export default function App() {
  return (
    <div className="flex h-[768px] w-[1366px] flex-col overflow-hidden bg-[#efefef] font-['DejaVu_Sans_Condensed','DejaVu_Sans',sans-serif] text-[11px] [font-stretch:condensed]">
      <TitleBar />
      <MenuRow />
      <Ribbon />
      <DocTabs />
      <div className="flex h-[523px] shrink-0">
        <SideBar />
        <div className="flex w-[1313px] flex-col bg-[#a9a9a9]">
          <div className="flex">
            <div className="flex w-[14px] shrink-0 items-center">
              <Svg w={4} h={44} className="-mt-[62px] ml-[1px]" crisp><path d="M1.500 0v44M3.500 0v44" stroke="#666" strokeDasharray="1 2" /></Svg>
            </div>
            <div className="w-px shrink-0 bg-[#555]" />
            <Document />
            <div className="w-px shrink-0 bg-[#555]" />
            <div className="w-[7px] shrink-0" />
          </div>
          <div className="pl-[7px]"><DesktopStrip /></div>
        </div>
        <Scrollbar />
      </div>
      <StatusBar />
      <Taskbar />
    </div>
  );
}
